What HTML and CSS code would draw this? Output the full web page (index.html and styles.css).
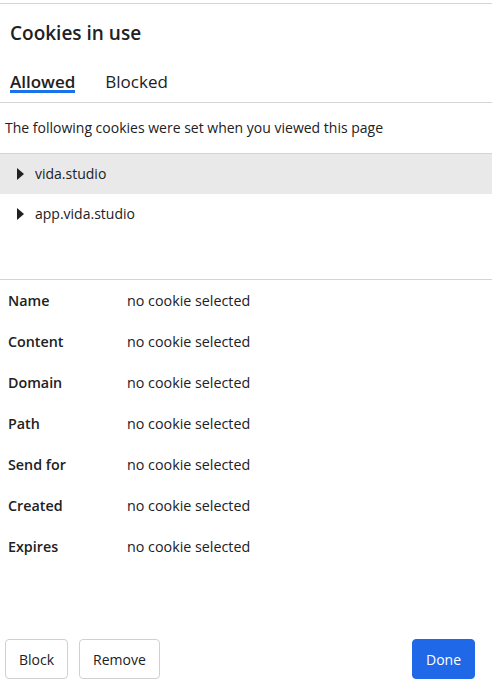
FILE: index.html
```html
<!DOCTYPE html>
<html lang="en">
<head>
    <meta charset="UTF-8">
    <title>Cookies in use</title>
    <link rel="stylesheet" href="styles.css">
</head>
<body>
    <div class="dialog">
        <h1 class="title">Cookies in use</h1>
        <div class="tabs">
            <span class="tab active">Allowed</span>
            <span class="tab">Blocked</span>
        </div>
        <p class="intro">The following cookies were set when you viewed this page</p>
        <div class="tree">
            <div class="tree-row selected"><span class="arrow"></span>vida.studio</div>
            <div class="tree-row"><span class="arrow"></span>app.vida.studio</div>
        </div>
        <div class="details">
            <div class="detail"><span class="label">Name</span><span class="value">no cookie selected</span></div>
            <div class="detail"><span class="label">Content</span><span class="value">no cookie selected</span></div>
            <div class="detail"><span class="label">Domain</span><span class="value">no cookie selected</span></div>
            <div class="detail"><span class="label">Path</span><span class="value">no cookie selected</span></div>
            <div class="detail"><span class="label">Send for</span><span class="value">no cookie selected</span></div>
            <div class="detail"><span class="label">Created</span><span class="value">no cookie selected</span></div>
            <div class="detail"><span class="label">Expires</span><span class="value">no cookie selected</span></div>
        </div>
        <div class="buttons">
            <button class="btn">Block</button>
            <button class="btn">Remove</button>
            <button class="btn primary">Done</button>
        </div>
    </div>
</body>
</html>
```
FILE: styles.css
```css
body {
    margin: 0;
    background-color: #fff;
    font-family: "Open Sans", "Noto Sans", sans-serif;
    color: #202124;
}
.dialog {
    margin-top: 3px;
    height: 684px;
    border-top: 1px solid #d4d4d4;
    display: flex;
    flex-direction: column;
    box-sizing: border-box;
}
.title {
    margin: 17px 0 0 10px;
    font-size: 19px;
    font-weight: 600;
    line-height: 25px;
}
.tabs {
    display: flex;
    gap: 30px;
    margin-top: 26px;
    padding-left: 10px;
    height: 30px;
    border-bottom: 1px solid #d4d4d4;
}
.tab {
    font-size: 17px;
    line-height: 19px;
    height: 18px;
}
.tab.active {
    font-weight: 600;
    border-bottom: 3px solid #1a73e8;
}
.intro {
    margin: 0;
    padding: 15px 0 0 5px;
    height: 35px;
    font-size: 14px;
    line-height: 20px;
    border-bottom: 1px solid #d4d4d4;
}
.tree {
    height: 125px;
    border-bottom: 1px solid #d4d4d4;
}
.tree-row {
    display: flex;
    align-items: center;
    height: 40px;
    padding-left: 17px;
    padding-bottom: 1px;
    box-sizing: border-box;
    font-size: 14px;
}
.tree-row.selected {
    background-color: #e9e9e9;
}
.arrow {
    width: 0;
    height: 0;
    border-top: 6px solid transparent;
    border-bottom: 6px solid transparent;
    border-left: 7px solid #202124;
    margin-right: 11px;
}
.details {
    padding: 0 8px;
}
.detail {
    display: flex;
    align-items: center;
    height: 41px;
    font-size: 14.3px;
}
.label {
    width: 119px;
    font-weight: 600;
}
.buttons {
    margin-top: auto;
    display: flex;
    gap: 11px;
    padding: 0 17px 8px 5px;
}
.btn {
    height: 40px;
    padding: 0 13px;
    background-color: #fff;
    border: 1px solid #d0d0d0;
    border-radius: 4px;
    font-family: inherit;
    font-size: 14px;
    color: #202124;
}
.btn.primary {
    margin-left: auto;
    background-color: #1f68e8;
    border-color: #1f68e8;
    color: #fff;
}
```
